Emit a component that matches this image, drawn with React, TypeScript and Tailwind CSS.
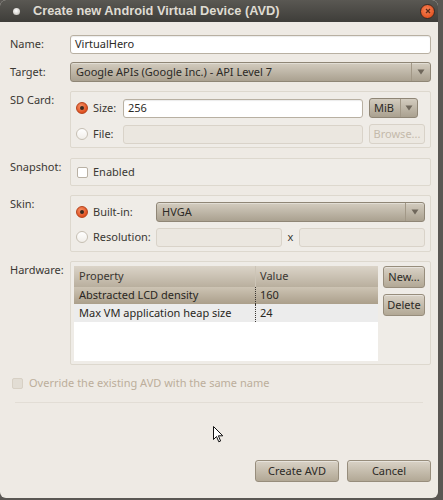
import React from "react";

const font = { fontFamily: '"Noto Sans", "Liberation Sans", sans-serif' };

function Arrow() {
  return (
    <svg width="8" height="6" viewBox="0 0 8 6">
      <path d="M0.5 0.5 L7.5 0.5 L4 5.5 Z" fill="#6f675b" />
    </svg>
  );
}

function Radio({ on }: { on?: boolean }) {
  return on ? (
    <div className="w-[12px] h-[12px] rounded-full bg-[radial-gradient(circle_at_40%_35%,#f5936a,#e0501f_70%,#c1401a)] border border-[#b5431c] flex items-center justify-center shrink-0">
      <div className="w-[4px] h-[4px] rounded-full bg-[#3a2a20]" />
    </div>
  ) : (
    <div className="w-[12px] h-[12px] rounded-full bg-[linear-gradient(#ffffff,#f1eee9)] border border-[#c6bfb3] shrink-0" />
  );
}

function Check({ disabled }: { disabled?: boolean }) {
  return (
    <div
      className={
        disabled
          ? "w-[11px] h-[11px] rounded-[2px] bg-[#e2ddd4] border border-[#d7d0c4] shrink-0"
          : "w-[11px] h-[11px] rounded-[2px] bg-white border border-[#b9b1a4] shrink-0"
      }
    />
  );
}

function Combo({ text, w }: { text: string; w: string }) {
  return (
    <div
      className={`${w} h-[20px] rounded-[3px] border border-[#8f8676] bg-[linear-gradient(#d3ccbf,#aaa190)] flex items-center text-[#2c2a26] shadow-[inset_0_1px_0_rgba(255,255,255,0.35)]`}
    >
      <div className="flex-1 pl-[5px] truncate">{text}</div>
      <div className="w-[19px] h-full border-l border-[#a29887] flex items-center justify-center">
        <Arrow />
      </div>
    </div>
  );
}

function Input({ w, text, disabled }: { w: string; text?: string; disabled?: boolean }) {
  return (
    <div
      className={
        disabled
          ? `${w} h-[19px] rounded-[3px] border border-[#d9d3c9] bg-[#ebe7e0]`
          : `${w} h-[19px] rounded-[3px] border border-[#b8b0a2] bg-white flex items-center pl-[4px] text-[#2c2a26] shadow-[inset_0_1px_1px_rgba(0,0,0,0.08)]`
      }
    >
      {text}
    </div>
  );
}

function Btn({ text, w, h }: { text: string; w: string; h: string }) {
  return (
    <div
      className={`${w} ${h} rounded-[3px] border border-[#978d7c] bg-[linear-gradient(#d9d2c6,#b2a895)] flex items-center justify-center text-[#2c2a26] shadow-[inset_0_1px_0_rgba(255,255,255,0.4)]`}
    >
      {text}
    </div>
  );
}

function Group({ h, children, className = "" }: { h: string; children: React.ReactNode; className?: string }) {
  return (
    <div className={`w-[361px] ${h} border border-[#ddd8ce] rounded-[2px] bg-[#efece7] ${className}`}>{children}</div>
  );
}

export default function App() {
  return (
    <div className="w-[443px] h-[500px] bg-[#5a5753] overflow-hidden text-[11px] text-[#3a3833]" style={font}>
      <div className="relative w-[438px] h-[498px] bg-[#eeeae4] rounded-b-[6px] rounded-t-[6px] overflow-hidden flex flex-col">
        {/* title bar */}
        <div className="h-[22px] bg-[linear-gradient(#5a5853,#3e3d39)] flex items-center shrink-0">
          <div className="w-[30px] flex items-center justify-center">
            <div className="w-[7px] h-[7px] rounded-full bg-[radial-gradient(circle_at_45%_40%,#ffffff,#b8b4ac)] ml-[2px]" />
          </div>
          <div className="text-[12.8px] font-bold text-[#dfdbd2] ml-[3px]" style={{ fontFamily: '"Liberation Sans", sans-serif' }}>
            Create new Android Virtual Device (AVD)
          </div>
          <div className="ml-auto mr-[3px] w-[15px] h-[15px] rounded-full bg-[radial-gradient(circle_at_45%_40%,#f9865a,#e2511f_75%,#b13f16)] border border-[#3a2a24] flex items-center justify-center">
            <svg width="6" height="6" viewBox="0 0 6 6">
              <path d="M1 1 L5 5 M5 1 L1 5" stroke="#5a2a18" strokeWidth="1.3" />
            </svg>
          </div>
        </div>

        <div className="pl-[10px] flex flex-col">
          {/* Name */}
          <div className="flex items-center mt-[13px]">
            <div className="w-[60px]">Name:</div>
            <Input w="w-[361px]" text="VirtualHero" />
          </div>
          {/* Target */}
          <div className="flex items-center mt-[8px]">
            <div className="w-[60px]">Target:</div>
            <Combo w="w-[361px]" text="Google APIs (Google Inc.) - API Level 7" />
          </div>
          {/* SD card */}
          <div className="flex mt-[9px]">
            <div className="w-[60px] pt-[1px]">SD Card:</div>
            <Group h="h-[57px]" className="pl-[5px] pt-[6px] flex flex-col gap-[6px]">
              <div className="flex items-center h-[20px]">
                <Radio on />
                <div className="w-[35px] pl-[5px]">Size:</div>
                <Input w="w-[240px]" text="256" />
                <div className="ml-[6px] w-[49px] h-[20px] rounded-[3px] border border-[#8f8676] bg-[linear-gradient(#d3ccbf,#aaa190)] flex items-center text-[#2c2a26]">
                  <div className="w-[30px] pl-[4px]">MiB</div>
                  <div className="flex-1 h-full border-l border-[#a29887] flex items-center justify-center">
                    <Arrow />
                  </div>
                </div>
              </div>
              <div className="flex items-center h-[20px]">
                <Radio />
                <div className="w-[35px] pl-[5px]">File:</div>
                <Input w="w-[240px]" disabled />
                <div className="ml-[6px] w-[56px] h-[20px] rounded-[3px] border border-[#d8d2c8] bg-[#ece8e1] flex items-center justify-center text-[#c4baab]">
                  Browse...
                </div>
              </div>
            </Group>
          </div>
          {/* Snapshot */}
          <div className="flex mt-[10px]">
            <div className="w-[60px] pt-[1px]">Snapshot:</div>
            <Group h="h-[28px]" className="pl-[6px] flex items-center">
              <Check />
              <div className="pl-[5px]">Enabled</div>
            </Group>
          </div>
          {/* Skin */}
          <div className="flex mt-[9px]">
            <div className="w-[60px] pt-[1px]">Skin:</div>
            <Group h="h-[57px]" className="pl-[5px] pt-[6px] flex flex-col gap-[5px]">
              <div className="flex items-center h-[20px]">
                <Radio on />
                <div className="w-[68px] pl-[5px]">Built-in:</div>
                <Combo w="w-[269px]" text="HVGA" />
              </div>
              <div className="flex items-center h-[20px]">
                <Radio />
                <div className="w-[68px] pl-[5px]">Resolution:</div>
                <Input w="w-[126px]" disabled />
                <div className="w-[17px] text-center">x</div>
                <Input w="w-[126px]" disabled />
              </div>
            </Group>
          </div>
          {/* Hardware */}
          <div className="flex mt-[9px]">
            <div className="w-[60px] pt-[1px]">Hardware:</div>
            <Group h="h-[104px]" className="pl-[3px] pt-[4px] flex gap-[5px]">
              <div className="w-[304px] h-[95px] bg-white flex flex-col">
                <div className="h-[21px] flex bg-[linear-gradient(#dbd4c8,#b9af9e)] text-[#3a3631]">
                  <div className="w-[182px] pl-[5px] flex items-center border-r border-[#ccc4b6]">Property</div>
                  <div className="flex-1 pl-[4px] flex items-center">Value</div>
                </div>
                <div className="h-[17px] flex bg-[linear-gradient(#cdc4b4,#ab9f8b)] text-[#2a2722]">
                  <div className="w-[182px] pl-[5px] flex items-center border-r border-dotted border-[#3a3631]">Abstracted LCD density</div>
                  <div className="flex-1 pl-[4px] flex items-center">160</div>
                </div>
                <div className="h-[18px] flex bg-[#ececec] text-[#2a2722]">
                  <div className="w-[182px] pl-[5px] flex items-center border-r border-dotted border-[#3a3631]">Max VM application heap size</div>
                  <div className="flex-1 pl-[4px] flex items-center">24</div>
                </div>
              </div>
              <div className="flex flex-col gap-[6px]">
                <Btn text="New..." w="w-[42px]" h="h-[22px]" />
                <Btn text="Delete" w="w-[42px]" h="h-[22px]" />
              </div>
            </Group>
          </div>
        </div>

        {/* override */}
        <div className="flex items-center pl-[12px] mt-[10px] text-[#bcae9b]">
          <Check disabled />
          <div className="pl-[6px]">Override the existing AVD with the same name</div>
        </div>
        <div className="mx-[15px] mt-[10px] h-[1px] bg-[#e2ddd5]" />

        <div className="flex-1" />
        <div className="flex justify-end gap-[8px] pr-[7px] mb-[16px]">
          <Btn text="Create AVD" w="w-[84px]" h="h-[22px]" />
          <Btn text="Cancel" w="w-[84px]" h="h-[22px]" />
        </div>

        {/* mouse cursor */}
        <svg className="absolute left-[213px] top-[426px]" width="11" height="17" viewBox="0 0 11 17">
          <path d="M0.5 0.5 L0.5 13.5 L3.5 10.5 L5.8 15.8 L7.6 15 L5.4 9.8 L9.8 9.8 Z" fill="#ffffff" stroke="#111111" strokeWidth="1" strokeLinejoin="round" />
        </svg>
      </div>
    </div>
  );
}
